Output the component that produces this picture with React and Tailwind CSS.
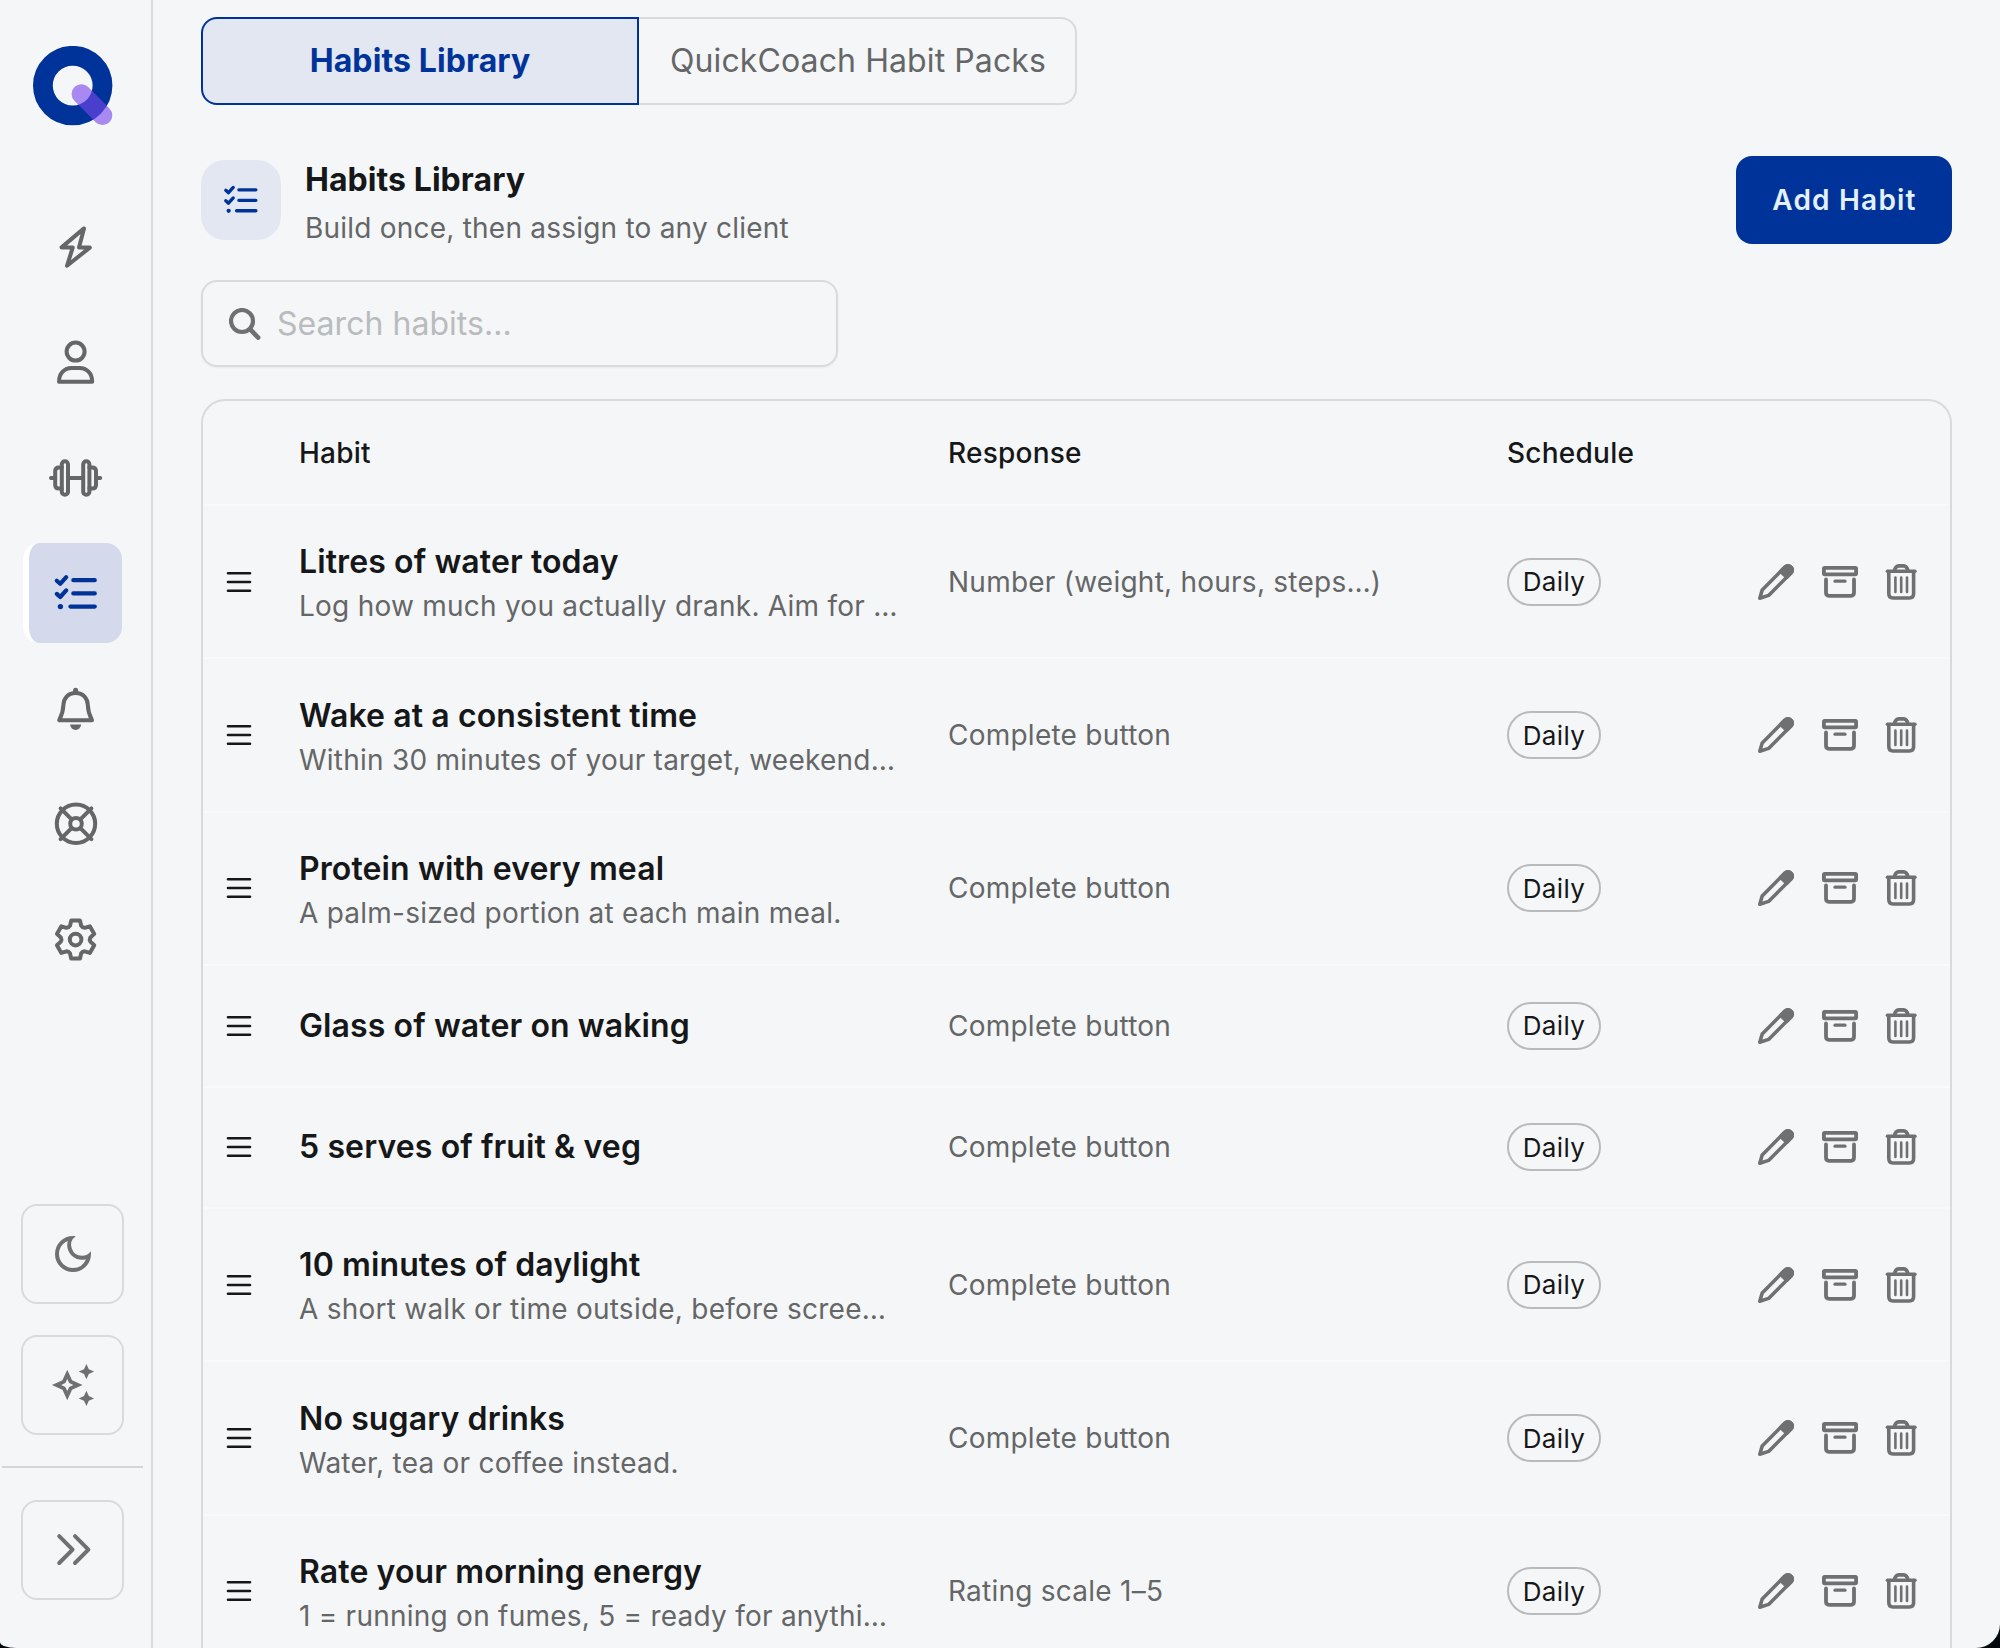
import { MdOutlineAutoAwesome, MdOutlineDarkMode } from "react-icons/md";

const habits = [
  {
    name: "Litres of water today",
    description: "Log how much you actually drank. Aim for …",
    response: "Number (weight, hours, steps…)",
  },
  {
    name: "Wake at a consistent time",
    description: "Within 30 minutes of your target, weekend…",
    response: "Complete button",
  },
  {
    name: "Protein with every meal",
    description: "A palm-sized portion at each main meal.",
    response: "Complete button",
  },
  { name: "Glass of water on waking", response: "Complete button" },
  { name: "5 serves of fruit & veg", response: "Complete button" },
  {
    name: "10 minutes of daylight",
    description: "A short walk or time outside, before scree…",
    response: "Complete button",
  },
  {
    name: "No sugary drinks",
    description: "Water, tea or coffee instead.",
    response: "Complete button",
  },
  {
    name: "Rate your morning energy",
    description: "1 = running on fumes, 5 = ready for anythi…",
    response: "Rating scale 1–5",
  },
];

function Icon({ size = 48, strokeWidth = 4, className = "", children }) {
  return (
    <svg
      width={size}
      height={size}
      viewBox={`0 0 ${size} ${size}`}
      fill="none"
      stroke="currentColor"
      strokeWidth={strokeWidth}
      strokeLinecap="round"
      strokeLinejoin="round"
      className={`shrink-0 ${className}`}
    >
      {children}
    </svg>
  );
}

function Logo() {
  return (
    <svg width="80" height="80" viewBox="0 0 80 80" fill="none">
      <circle cx="39.7" cy="39.6" r="29.8" stroke="#003399" strokeWidth="19.8" />
      <path d="M48.3 47.9L69.6 69.4" stroke="#7746ed" strokeOpacity="0.62" strokeWidth="19.4" strokeLinecap="round" />
    </svg>
  );
}

function BoltIcon() {
  return (
    <Icon>
      <path d="M32 5.4L9.6 24.4H20.8L15 42.8L37.8 24.6H27Z" />
    </Icon>
  );
}

function PersonIcon() {
  return (
    <Icon>
      <circle cx="23.6" cy="13.6" r="9" />
      <path d="M7 43.8C7 35.2 12.6 30 19.6 30H27.6C34.6 30 40.2 35.2 40.2 43.8Z" />
    </Icon>
  );
}

function DumbbellIcon() {
  return (
    <Icon size={56} strokeWidth={4}>
      <rect x="13.8" y="11.2" width="6.2" height="33.6" rx="3.1" />
      <rect x="35.2" y="11.2" width="6.2" height="33.6" rx="3.1" />
      <path d="M13.8 17.4H11Q7.2 17.4 7.2 21V35Q7.2 38.6 11 38.6H13.8M41.4 17.4H44.2Q48 17.4 48 21V35Q48 38.6 44.2 38.6H41.4" />
      <path d="M3 28H7.2M20.2 28H35M48 28H52.2" />
    </Icon>
  );
}

function ChecklistIcon({ size = 48 }) {
  return (
    <svg
      width={size}
      height={size}
      viewBox="0 0 48 48"
      fill="none"
      stroke="currentColor"
      strokeWidth="4.2"
      strokeLinecap="round"
      strokeLinejoin="round"
      className="shrink-0"
    >
      <path d="M21.3 11.2H42.8M21.3 24.4H42.8M18.4 37.6H42.8" />
      <path d="M4.8 11.7L8.2 14.8L14.2 8.2M4.8 24.9L8.2 28L14.2 21.4" />
      <circle cx="8.4" cy="37.6" r="2.7" fill="currentColor" stroke="none" />
    </svg>
  );
}

function BellIcon() {
  return (
    <Icon>
      <path d="M23.6 9C15.8 9 11.6 14.4 11.4 21C11.2 28.4 9.6 31.6 7.2 36.2H40C37.6 31.6 36 28.4 35.8 21C35.6 14.4 31.4 9 23.6 9Z" />
      <path d="M23.6 6.2V8" strokeWidth="5" />
      <path d="M18 40.6H29.2C28.6 44 26.6 46 23.6 46C20.6 46 18.6 44 18 40.6Z" fill="currentColor" stroke="none" />
    </Icon>
  );
}

function LifebuoyIcon() {
  return (
    <Icon>
      <circle cx="24" cy="24.8" r="19.2" />
      <circle cx="24" cy="24.8" r="5.8" />
      <path d="M19.6 20.4L8.6 9.4M28.4 20.4L39.4 9.4M19.6 29.2L8.6 40.2M28.4 29.2L39.4 40.2" />
    </Icon>
  );
}

// one tooth and the valley after it, turned six times round the centre
const toothPoints = [[-5.6, -13.8], [-4.4, -19], [4.4, -19], [5.6, -13.8], [6.8, -11.8]];

function gearPath() {
  let d = "";
  for (let i = 0; i < 6; i++) {
    const angle = (i * Math.PI) / 3;
    const [a, b, c, e, valley] = toothPoints.map(([x, y]) => {
      const px = x * Math.cos(angle) - y * Math.sin(angle);
      const py = x * Math.sin(angle) + y * Math.cos(angle);
      return `${px.toFixed(2)} ${py.toFixed(2)}`;
    });
    d += `${i === 0 ? "M" : ""}${a}L${b}L${c}L${e}Q${valley} `;
  }
  return `${d}-5.6 -13.8Z`;
}

function GearIcon() {
  return (
    <Icon>
      <g transform="translate(23.6 24.6)">
        <path d={gearPath()} />
        <circle r="5.8" />
      </g>
    </Icon>
  );
}

function DoubleChevronIcon() {
  return (
    <Icon>
      <path d="M10.2 10.2L23.6 23.6L10.2 37M26 10.2L39.4 23.6L26 37" />
    </Icon>
  );
}

function SearchIcon() {
  return (
    <Icon size={32} strokeWidth={4.2}>
      <circle cx="13" cy="13" r="11" />
      <path d="M21.2 21.4L29.2 29.6" strokeWidth="4.6" />
    </Icon>
  );
}

function DragIcon() {
  return (
    <Icon size={26} strokeWidth={2.6} className="text-[#151718]">
      <path d="M2 4.2H24M2 13H24M2 21.8H24" />
    </Icon>
  );
}

function PencilIcon() {
  return (
    <Icon size={36} strokeWidth={3.6}>
      <path d="M1.8 34.2L4.2 26L27 3C28.8 1.4 31.2 1.4 32.8 3C34.6 4.6 34.8 7 33.2 8.8L10.6 31.4Z" />
      <path d="M22.6 7.4L27 3C28.8 1.4 31.2 1.4 32.8 3C34.6 4.6 34.8 7 33.2 8.8L28.8 13.2Z" fill="currentColor" />
    </Icon>
  );
}

function ArchiveIcon() {
  return (
    <Icon size={36} strokeWidth={3.8}>
      <rect x="1.9" y="3.9" width="32.2" height="6.4" rx="0.8" />
      <path d="M4 15.4V28.6Q4 31.8 7 31.8H29Q32 31.8 32 28.6V15.4" />
      <path d="M13 17.2H23" strokeWidth="3.2" />
    </Icon>
  );
}

function TrashIcon() {
  return (
    <Icon size={36} strokeWidth={3.6} className="-ml-[3px]">
      <path d="M4.4 7.2H32" strokeWidth="3.4" />
      <path d="M11.4 7C12.2 3.2 13.6 1.9 15.8 1.9H20.6C22.8 1.9 24.2 3.2 25 7" />
      <path d="M5.8 8V29.6Q5.8 34 10 34H26.4Q30.6 34 30.6 29.6V8" />
      <path d="M12.4 13.6V28M18.2 13.6V28M24 13.6V28" strokeWidth="2.6" />
    </Icon>
  );
}

function NavItem({ active, children }) {
  return (
    <button
      type="button"
      className={
        active
          ? "flex h-[100px] w-[99px] items-center justify-center rounded-2xl border-l-6 border-white bg-[#d4daeb] text-[#003399]"
          : "flex h-[100px] w-[99px] items-center justify-center border-l-6 border-transparent"
      }
    >
      {children}
    </button>
  );
}

function SquareButton({ children }) {
  return (
    <button
      type="button"
      className="flex h-[100px] w-[103px] items-center justify-center rounded-2xl border-2 border-[#d9dadb] text-[#6f7072]"
    >
      {children}
    </button>
  );
}

function Sidebar() {
  return (
    <aside className="flex w-[153px] shrink-0 flex-col border-r-2 border-[#d9dadc] text-[#656667]">
      <div className="pt-[46px] pl-[33px]">
        <Logo />
      </div>
      <nav className="mt-[71px] ml-[23px] flex flex-col gap-[15.3px]">
        <NavItem><BoltIcon /></NavItem>
        <NavItem><PersonIcon /></NavItem>
        <NavItem><DumbbellIcon /></NavItem>
        <NavItem active><ChecklistIcon size={48} /></NavItem>
        <NavItem><BellIcon /></NavItem>
        <NavItem><LifebuoyIcon /></NavItem>
        <NavItem><GearIcon /></NavItem>
      </nav>
      <div className="mt-auto mb-12 flex flex-col">
        <div className="ml-[21px] flex flex-col gap-[31px]">
          <SquareButton><MdOutlineDarkMode size={48} /></SquareButton>
          <SquareButton><MdOutlineAutoAwesome size={46} /></SquareButton>
        </div>
        <hr className="mt-[31px] mb-8 ml-[2px] w-[141px] border-t-2 border-[#d4d5d7]" />
        <div className="ml-[21px]">
          <SquareButton><DoubleChevronIcon /></SquareButton>
        </div>
      </div>
    </aside>
  );
}

function HabitRow({ habit }) {
  return (
    <div
      className={
        habit.description
          ? "flex h-[153.4px] shrink-0 items-center border-t-2 border-[#f8f9fa]"
          : "flex h-[121.4px] shrink-0 items-center border-t-2 border-[#f9fafb]"
      }
    >
      <div className="w-24 shrink-0 pl-[23px]">
        <DragIcon />
      </div>
      <div className="w-[649px] shrink-0">
        <p className="text-[32px] leading-[44px] font-semibold tracking-[0.11px] text-[#151718]">{habit.name}</p>
        {habit.description && (
          <p className="-mb-[5px] text-[28px] leading-[44px] tracking-[0.24px] whitespace-nowrap text-[#656667]">
            {habit.description}
          </p>
        )}
      </div>
      <p className="w-[559px] shrink-0 text-[28px] tracking-[0.24px] text-[#656667]">{habit.response}</p>
      <div className="flex-1">
        <span className="inline-flex h-12 w-[94px] items-center justify-center rounded-full border-2 border-[#b9babc] text-[26px] tracking-[0.4px] text-[#151718]">
          Daily
        </span>
      </div>
      <div className="flex gap-7 pr-[31px] text-[#6f7072]">
        <PencilIcon />
        <ArchiveIcon />
        <TrashIcon />
      </div>
    </div>
  );
}

function App() {
  return (
    <div className="h-[1648px] w-[2000px] overflow-hidden bg-[#02090e] font-['Inter',sans-serif]">
      <div className="flex h-full overflow-hidden rounded-br-[24px] rounded-bl-[16px_6px] bg-[#f4f6f8]">
        <Sidebar />
        <main className="flex flex-1 flex-col pt-[17px] pr-12 pl-12">
          <div className="flex h-[88px] w-[876px] shrink-0 text-[32px]">
            <button
              type="button"
              className="w-[438px] rounded-l-2xl border-2 border-[#003399] bg-[#e2e7f1] font-bold tracking-[0.1px] text-[#003399]"
            >
              Habits Library
            </button>
            <button
              type="button"
              className="w-[438px] rounded-r-2xl border-2 border-l-0 border-[#d9dadc] pl-[2px] tracking-[0.1px] text-[#656667]"
            >
              QuickCoach Habit Packs
            </button>
          </div>

          <div className="mt-[51px] flex h-[88px] shrink-0 items-start">
            <div className="mt-1 flex size-20 items-center justify-center rounded-3xl bg-[#e2e7f1] text-[#003399]">
              <ChecklistIcon size={38} />
            </div>
            <div className="ml-6">
              <h1 className="text-[32px] leading-[48px] font-bold tracking-[0.06px] text-[#151718]">Habits Library</h1>
              <p className="text-[28px] leading-[48px] tracking-[0.22px] text-[#656667]">
                Build once, then assign to any client
              </p>
            </div>
            <button
              type="button"
              className="ml-auto h-[88px] w-[216px] rounded-2xl bg-[#003399] pl-px text-[28px] font-semibold tracking-[1.2px] text-[#e3f0fd]"
            >
              Add Habit
            </button>
          </div>

          <div className="mt-9 flex h-[87px] w-[637px] shrink-0 items-center gap-4 rounded-2xl border-2 border-[#d9dadc] pl-[26px] shadow-xs">
            <span className="text-[#6f7072]"><SearchIcon /></span>
            <span className="text-[32px] tracking-[0.04px] text-[#b9bbbd]">Search habits...</span>
          </div>

          <section className="mt-8 flex min-h-0 w-[1751px] flex-1 flex-col overflow-hidden rounded-t-3xl border-2 border-b-0 border-[#d9dadc] bg-[#f5f6f8]">
            <div className="flex h-[103px] shrink-0 items-center pt-px pl-24 text-[28px] font-medium tracking-[0.24px] text-[#151718]">
              <span className="w-[649px]">Habit</span>
              <span className="w-[559px]">Response</span>
              <span>Schedule</span>
            </div>
            {habits.map((habit) => (
              <HabitRow key={habit.name} habit={habit} />
            ))}
          </section>
        </main>
      </div>
    </div>
  );
}

export default App;
